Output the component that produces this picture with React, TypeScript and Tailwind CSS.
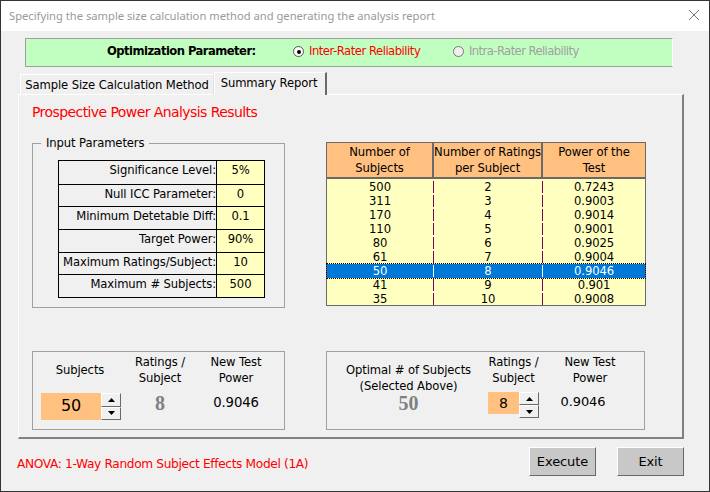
import React from "react";

function Spin({ h }: { h: string }) {
  return (
    <div className={`flex flex-col w-[20px] ${h}`}>
      {[0, 1].map((i) => (
        <div key={i} className="flex-1 bg-[#f0f0f0] border border-t-white border-l-white border-r-[#696969] border-b-[#696969] flex items-center justify-center">
          <svg width="7" height="4" viewBox="0 0 7 4" className={i === 1 ? "rotate-180" : ""}>
            <path d="M3.5 0 L7 4 L0 4 Z" fill="#000" />
          </svg>
        </div>
      ))}
    </div>
  );
}

const params: [string, string][] = [
  ["Significance Level:", "5%"],
  ["Null ICC Parameter:", "0"],
  ["Minimum Detetable Diff:", "0.1"],
  ["Target Power:", "90%"],
  ["Maximum Ratings/Subject:", "10"],
  ["Maximum # Subjects:", "500"],
];

const rows: [string, string, string][] = [
  ["500", "2", "0.7243"],
  ["311", "3", "0.9003"],
  ["170", "4", "0.9014"],
  ["110", "5", "0.9001"],
  ["80", "6", "0.9025"],
  ["61", "7", "0.9004"],
  ["50", "8", "0.9046"],
  ["41", "9", "0.901"],
  ["35", "10", "0.9008"],
];

export default function App() {
  return (
    <div className="w-[710px] h-[492px] bg-[#f0f0f0] border border-[#333333] flex flex-col overflow-hidden text-[11.6px] leading-[16px] tracking-[-0.1px] text-[#000] font-['DejaVu_Sans',sans-serif]">
      <div className="h-[30px] shrink-0 bg-white flex items-center justify-between pl-[8px] pr-[9px] text-[#999999] text-[11.2px] tracking-normal font-['Noto_Sans',sans-serif]">
        <span>Specifying the sample size calculation method and generating the analysis report</span>
        <svg width="12" height="12" viewBox="0 0 12 12" className="-mt-[2px]"><path d="M1 1 L11 11 M11 1 L1 11" stroke="#777" strokeWidth="1" /></svg>
      </div>

      <div className="ml-[24px] mt-[7px] w-[648px] h-[29px] shrink-0 bg-[#c0ffc0] border border-t-[#a0a0a0] border-l-[#a0a0a0] border-b-[#a0a0a0] border-r-white flex items-center">
        <span className="ml-[81px] w-[186px] pb-[3px] font-bold tracking-[-0.55px] whitespace-nowrap">Optimization Parameter:</span>
        <span className="-mt-[2px] w-[11px] h-[11px] rounded-full bg-white border border-[#555] flex items-center justify-center">
          <span className="w-[4px] h-[4px] rounded-full bg-black" />
        </span>
        <span className="ml-[5px] w-[144px] pb-[3px] whitespace-nowrap tracking-[-0.48px] text-[#ff0000]">Inter-Rater Reliability</span>
        <span className="-mt-[2px] w-[11px] h-[11px] rounded-full bg-[#f0f0f0] border border-[#777]" />
        <span className="ml-[5px] pb-[3px] whitespace-nowrap tracking-[-0.58px] text-[#a0a0a0]">Intra-Rater Reliability</span>
      </div>

      <div className="ml-[19px] mt-[5px] flex items-end h-[23px] shrink-0 relative z-10 -mb-px">
        <div className="w-[194px] h-[21px] border border-b-0 border-t-white border-l-white border-r-[#e0e0e0] flex items-center justify-center whitespace-nowrap">Sample Size Calculation Method</div>
        <div className="w-[113px] h-[23px] pb-[3px] pr-[2px] bg-[#f0f0f0] border-t border-l border-r-2 border-t-white border-l-white border-r-[#696969] flex items-center justify-center whitespace-nowrap">Summary Report</div>
      </div>

      <div className="ml-[17px] w-[666px] h-[345px] shrink-0 border-t border-l border-r-2 border-b-2 border-t-white border-l-white border-r-[#808080] border-b-[#808080] pl-[13px] flex flex-col">
        <div className="mt-[8px] text-[14px] leading-[18px] tracking-[-0.58px] text-[#ff0000]">Prospective Power Analysis Results</div>

        <div className="mt-[21px] flex items-start">
          <div className="relative w-[253px] h-[165px] border border-[#a0a0a0] mt-[1px] pl-[25px] pt-[16px]">
            <span className="absolute left-[8px] -top-[9px] px-[5px] bg-[#f0f0f0]">Input Parameters</span>
            <div className="w-[207px] border border-black">
              {params.map(([k, v], i) => (
                <div key={k} className={`flex h-[22.7px] ${i ? "border-t border-black" : ""}`}>
                  <div className="flex-1 min-w-0 pb-[4px] flex items-center justify-end whitespace-nowrap">{k}</div>
                  <div className="w-[48px] shrink-0 pb-[4px] bg-[#ffffc0] border-l border-black flex items-center justify-center">{v}</div>
                </div>
              ))}
            </div>
          </div>

          <div className="ml-[41px] w-[320px] h-[164px] border border-[#696969] bg-[#ffffc0] flex flex-col">
            <div className="h-[36px] shrink-0 bg-[#ffc080] border-b-2 border-[#696969] flex text-center">
              <div className="w-[105px] flex items-center justify-center">Number of<br />Subjects</div>
              <div className="w-[111px] border-x-2 border-[#696969] flex items-center justify-center whitespace-nowrap">Number of Ratings<br />per Subject</div>
              <div className="flex-1 flex items-center justify-center">Power of the<br />Test</div>
            </div>
            <div className="pt-[1px]">
              {rows.map(([a, b, c]) => {
                const sel = a === "50";
                const sep = `w-px h-[12px] my-px shrink-0 ${sel ? "bg-white" : "bg-[#800060]"}`;
                return (
                  <div key={a} className={`flex h-[14px] leading-[14px] text-center ${sel ? "bg-[#0078d7] text-white outline-1 outline-dotted outline-[#000]" : ""}`}>
                    <div className="w-[106px]">{a}</div>
                    <div className={sep} />
                    <div className="w-[108px]">{b}</div>
                    <div className={sep} />
                    <div className="flex-1">{c}</div>
                  </div>
                );
              })}
            </div>
          </div>
        </div>

        <div className="mt-[43px] flex items-start">
          <div className="w-[253px] h-[79px] border border-[#a0a0a0] flex items-start text-center">
            <div className="ml-[8px] w-[80px] flex flex-col">
              <div className="h-[41px] pt-[10px] w-[78px]">Subjects</div>
              <div className="flex">
                <div className="w-[60px] h-[27px] pb-[2px] bg-[#ffc080] flex items-center justify-center text-[16px]">50</div>
                <Spin h="h-[27px]" />
              </div>
            </div>
            <div className="ml-[9px] w-[60px]">
              <div className="pt-[2px] h-[38px]">Ratings /<br />Subject</div>
              <div className="font-['Liberation_Serif',serif] font-bold text-[20px] leading-[27px] text-[#808080]">8</div>
            </div>
            <div className="ml-[6px] w-[80px]">
              <div className="pt-[2px] h-[38px]">New Test<br />Power</div>
              <div className="text-[13.2px] leading-[25px]">0.9046</div>
            </div>
          </div>

          <div className="ml-[41px] w-[319px] h-[79px] border border-[#a0a0a0] flex items-start text-center">
            <div className="ml-[4px] w-[155px] pt-[10px]">
              <div>Optimal # of Subjects<br />(Selected Above)</div>
              <div className="font-['Liberation_Serif',serif] font-bold text-[20px] leading-[20px] -mt-[1px] text-[#808080]">50</div>
            </div>
            <div className="ml-[2px] w-[51px]">
              <div className="pt-[2px] h-[40px] -mx-[8px]">Ratings /<br />Subject</div>
              <div className="flex w-[51px]">
                <div className="w-[31px] h-[22px] bg-[#ffc080] flex items-center justify-center text-[14px]">8</div>
                <Spin h="h-[26px]" />
              </div>
            </div>
            <div className="ml-[11px] w-[80px]">
              <div className="pt-[2px] h-[39px]">New Test<br />Power</div>
              <div className="text-[13px] leading-[22px] -ml-[14px]">0.9046</div>
            </div>
          </div>
        </div>
      </div>

      <div className="mt-[8px] ml-[16px] w-[667px] flex items-start">
        <span className="mt-[9px] text-[#ff0000] text-[12.2px] tracking-[-0.35px] whitespace-nowrap">ANOVA: 1-Way Random Subject Effects Model (1A)</span>
        <button className="ml-auto w-[67px] h-[29px] bg-[#c8c8c8] border border-t-white border-l-white border-r-[#696969] border-b-[#696969] text-[13px]">Execute</button>
        <button className="ml-[21px] w-[67px] h-[29px] bg-[#c8c8c8] border border-t-white border-l-white border-r-[#696969] border-b-[#696969] text-[13px]">Exit</button>
      </div>
    </div>
  );
}
